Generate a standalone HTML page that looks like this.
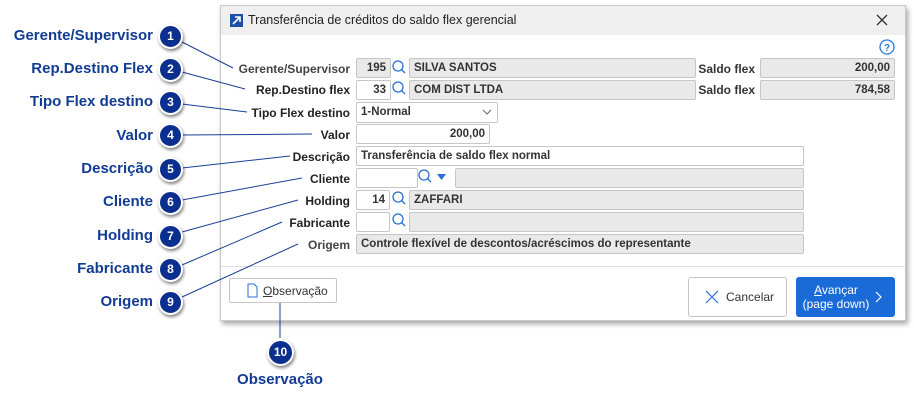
<!DOCTYPE html>
<html><head><meta charset="utf-8"><style>
*{box-sizing:border-box;margin:0;padding:0}
body{width:914px;height:405px;background:#fff;position:relative;overflow:hidden;font-family:"Liberation Sans",sans-serif}
.a{position:absolute}
.dlg{left:220px;top:5px;width:686px;height:316px;background:#fff;border:1px solid #c8c8c8;box-shadow:2px 3px 5px rgba(0,0,0,.35)}
.tb{left:0;top:0;width:684px;height:29px;background:#efefef}
.lbl{font-size:12px;font-weight:bold;color:#222;text-align:right;width:150px;left:200px}
.f{height:20px;border:1px solid #c6c6c6;border-radius:2px;font-size:11.5px;font-weight:bold;color:#333;padding:0 4px;line-height:18px;white-space:nowrap;overflow:hidden}
.g{background:#e9e9e9}
.w{background:#fff}
.r{text-align:right}
.cl{font-size:15px;font-weight:bold;color:#123c94;text-align:right;width:160px;left:-7px}
.c{width:25px;height:25px;border-radius:50%;background:#0b2f8f;border:2px solid #fff;box-shadow:1px 2px 3px rgba(0,0,0,.5);color:#fff;font-size:12px;font-weight:bold;text-align:center;line-height:21px}
</style></head><body>
<div class="a dlg">
 <div class="a tb"></div>
 <div class="a" style="left:9px;top:8px;width:13px;height:13px;background:#1b4fa8"></div>
 <svg class="a" style="left:9px;top:8px" width="13" height="13"><path d="M3 10 L10 3 M5 3 H10 V8" stroke="#fff" stroke-width="1.6" fill="none"/></svg>
 <div class="a" style="left:27px;top:7px;font-size:12.5px;color:#222">Transferência de créditos do saldo flex gerencial</div>
 <svg class="a" style="left:655px;top:8px" width="12" height="12"><path d="M1 1L11 11M11 1L1 11" stroke="#333" stroke-width="1.3"/></svg>
 <svg class="a" style="left:658px;top:33px" width="16" height="16"><circle cx="8" cy="8" r="7" stroke="#2a7ae0" stroke-width="1.3" fill="none"/><text x="8" y="12" font-size="10" font-family="Liberation Sans" fill="#2a7ae0" text-anchor="middle" font-weight="bold">?</text></svg>
 <div class="a" style="left:0;top:260px;width:684px;height:1px;background:#e2e2e2"></div>
</div>
<svg class="a" style="left:0;top:0" width="914" height="405">
<g stroke="#1a3f96" stroke-width="1" fill="none">
<line x1="182" y1="42" x2="233" y2="68"/>
<line x1="182" y1="72" x2="245" y2="89"/>
<line x1="182" y1="104" x2="247" y2="112"/>
<line x1="182" y1="135" x2="312" y2="134"/>
<line x1="182" y1="168" x2="290" y2="156"/>
<line x1="182" y1="200" x2="302" y2="178"/>
<line x1="182" y1="232" x2="298" y2="200"/>
<line x1="182" y1="265" x2="282" y2="222"/>
<line x1="182" y1="297" x2="298" y2="244"/>
<line x1="280" y1="303" x2="280" y2="338"/>
</g></svg>
<div class="a lbl" style="top:62px;color:#444">Gerente/Supervisor</div>
<div class="a lbl" style="top:83px">Rep.Destino flex</div>
<div class="a lbl" style="top:106px">Tipo Flex destino</div>
<div class="a lbl" style="top:128px">Valor</div>
<div class="a lbl" style="top:150px">Descrição</div>
<div class="a lbl" style="top:172px">Cliente</div>
<div class="a lbl" style="top:194px">Holding</div>
<div class="a lbl" style="top:216px">Fabricante</div>
<div class="a lbl" style="top:238px;color:#444">Origem</div>

<div class="a f g r" style="left:356px;top:58px;width:35px">195</div>
<div class="a f g" style="left:409px;top:58px;width:287px">SILVA SANTOS</div>
<div class="a lbl" style="left:600px;top:62px;width:155px;color:#333">Saldo flex</div>
<div class="a f g r" style="left:760px;top:58px;width:135px">200,00</div>
<div class="a f w r" style="left:356px;top:80px;width:35px">33</div>
<div class="a f g" style="left:409px;top:80px;width:287px">COM DIST LTDA</div>
<div class="a lbl" style="left:600px;top:83px;width:155px;color:#333">Saldo flex</div>
<div class="a f g r" style="left:760px;top:80px;width:135px">784,58</div>
<div class="a f w" style="left:356px;top:102px;width:142px;height:21px;line-height:19px">1-Normal</div>
<svg class="a" style="left:482px;top:108px" width="10" height="8"><path d="M1 2L5 6L9 2" stroke="#666" fill="none"/></svg>
<div class="a f w r" style="left:356px;top:124px;width:134px">200,00</div>
<div class="a f w" style="left:356px;top:146px;width:448px">Transferência de saldo flex normal</div>
<div class="a f w" style="left:356px;top:168px;width:62px"></div>
<svg class="a" style="left:437px;top:174px" width="9" height="6"><path d="M0 0H9L4.5 6Z" fill="#2a6fd6"/></svg>
<div class="a f g" style="left:455px;top:168px;width:349px"></div>
<div class="a f w r" style="left:356px;top:190px;width:34px">14</div>
<div class="a f g" style="left:409px;top:190px;width:395px">ZAFFARI</div>
<div class="a f w" style="left:356px;top:212px;width:34px"></div>
<div class="a f g" style="left:409px;top:212px;width:395px"></div>
<div class="a f g" style="left:356px;top:234px;width:448px;font-weight:bold">Controle flexível de descontos/acréscimos do representante</div>
<svg class="a" style="left:0;top:0" width="914" height="405"><g stroke="#2a6fd6" stroke-width="1.3" fill="none">
<circle cx="398" cy="66" r="5"/><path d="M401.5 69.5L405 73"/>
<circle cx="398" cy="87" r="5"/><path d="M401.5 90.5L405 94"/>
<circle cx="424" cy="175" r="5"/><path d="M427.5 178.5L431 182"/>
<circle cx="398" cy="197" r="5"/><path d="M401.5 200.5L405 204"/>
<circle cx="398" cy="219" r="5"/><path d="M401.5 222.5L405 226"/>
</g></svg>

<div class="a" style="left:229px;top:278px;width:108px;height:25px;border:1px solid #c6c6c6;border-radius:2px;background:#fff"></div>
<svg class="a" style="left:247px;top:283px" width="11" height="15"><path d="M1 1H7L10 4V14H1Z" stroke="#2a6fd6" fill="none"/></svg>
<div class="a" style="left:263px;top:284px;font-size:12px;color:#333"><u>O</u>bservação</div>
<div class="a" style="left:688px;top:277px;width:99px;height:40px;border:1px solid #c6c6c6;border-radius:3px;background:#fff"></div>
<svg class="a" style="left:705px;top:290px" width="14" height="14"><path d="M1 1L13 13M13 1L1 13" stroke="#2a6fd6" stroke-width="1.2"/></svg>
<div class="a" style="left:726px;top:290px;font-size:12px;color:#333">Cancelar</div>
<div class="a" style="left:796px;top:277px;width:99px;height:40px;border-radius:3px;background:#1a6ad8"></div>
<div class="a" style="left:799px;top:283px;font-size:12px;color:#fff;text-align:center;width:74px;line-height:14px;white-space:nowrap"><u>A</u>vançar<br>(page down)</div>
<svg class="a" style="left:875px;top:291px" width="8" height="12"><path d="M1 1L6 6L1 11" stroke="#fff" stroke-width="1.2" fill="none"/></svg>

<div class="a cl" style="top:27px">Gerente/Supervisor</div>
<div class="a cl" style="top:60px">Rep.Destino Flex</div>
<div class="a cl" style="top:93px">Tipo Flex destino</div>
<div class="a cl" style="top:127px">Valor</div>
<div class="a cl" style="top:160px">Descrição</div>
<div class="a cl" style="top:193px">Cliente</div>
<div class="a cl" style="top:227px">Holding</div>
<div class="a cl" style="top:260px">Fabricante</div>
<div class="a cl" style="top:293px">Origem</div>
<div class="a c" style="left:158px;top:24px">1</div>
<div class="a c" style="left:158px;top:57px">2</div>
<div class="a c" style="left:158px;top:90px">3</div>
<div class="a c" style="left:158px;top:123px">4</div>
<div class="a c" style="left:158px;top:157px">5</div>
<div class="a c" style="left:158px;top:190px">6</div>
<div class="a c" style="left:158px;top:224px">7</div>
<div class="a c" style="left:158px;top:257px">8</div>
<div class="a c" style="left:158px;top:290px">9</div>
<div class="a c" style="left:267px;top:339px;width:27px;height:27px;line-height:23px">10</div>
<div class="a" style="left:230px;top:371px;width:100px;text-align:center;font-size:15px;font-weight:bold;color:#123c94">Observação</div>
</body></html>
